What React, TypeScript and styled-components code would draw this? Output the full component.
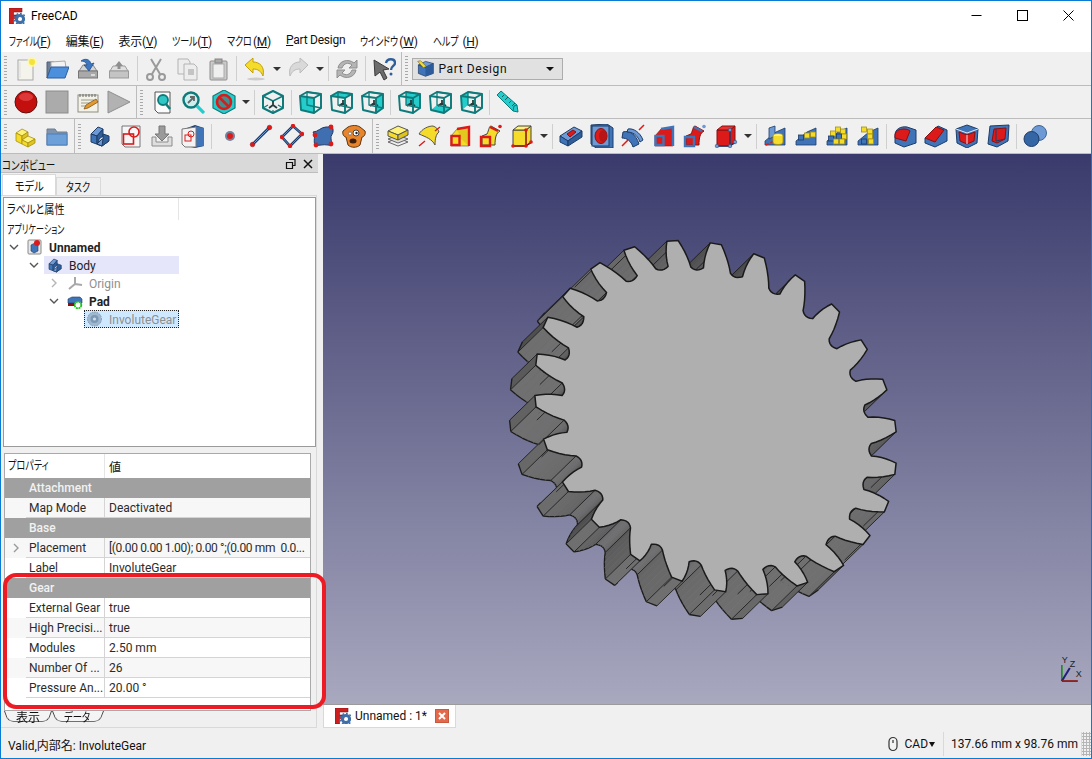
import React from 'react';
import styled, { createGlobalStyle } from 'styled-components';

const GlobalStyle = createGlobalStyle`
  html, body {
    margin: 0;
    padding: 0;
    background: #f0f0f0;
  }
  body {
    font-family: Roboto, "Noto Sans CJK JP", sans-serif;
    font-size: 12px;
    font-feature-settings: "palt";
    color: #111;
  }
`;

const Y = '#f5dc2a';
const YL = '#fff27a';
const YD = '#a58f10';
const B = '#3f74b8';
const BL = '#6d9ad4';
const BD = '#1d3c68';
const R = '#dd1a1a';
const RD = '#8a1010';
const T = '#25cccc';
const TD = '#0f7a7a';

const faces: Record<string, string> = {
  front: '2,6 16,8 16,23 3,20',
  top: '2,6 9,2 23,4 16,8',
  right: '16,8 23,4 23,18 16,23',
  left: '2,6 9,2 9,15 3,20',
  rear: '9,2 23,4 23,18 9,15',
  bottom: '3,20 9,15 23,18 16,23',
};

const Cube = ({ fill }: { fill: string }) => (
  <g stroke={TD} strokeLinejoin="round" fill="none">
    <polygon points={faces[fill]} fill={T} stroke="none" />
    {fill !== 'front' && <path d="M14 13v-3M14 13l-4 3M14 13l4 3" stroke="#263c3c" strokeWidth="1.800" />}
    <polygon points={faces.rear} strokeWidth="1.300" />
    <polygon points={faces.front} strokeWidth="1.900" />
    <path d="M2 6l7-4 14 2v14l-7 5M16 8l7-4" strokeWidth="1.900" />
  </g>
);

const Pattern = ({ kind }: { kind: string }) => (
  <g stroke={BD} strokeWidth="0.8">
    <polygon points="2,17 13,8 22,4 22,21 2,21" fill={B} />
    {kind === 'mirror' && (
      <>
        <polygon points="6,4 12,2 12,12 6,15" fill={BL} />
        <path d="M3 21l18-9" stroke={R} strokeWidth="1.400" strokeDasharray="3 2" />
        <ellipse cx="15" cy="12" rx="5" ry="2.500" fill={YL} stroke={YD} />
        <path d="M10 12v6a5 2.500 0 0 0 10 0v-6" fill={Y} stroke={YD} />
      </>
    )}
    {kind !== 'mirror' &&
      (kind === 'linear'
        ? [[7, 13, B], [13, 11, Y], [19, 10, Y]]
        : kind === 'polar'
          ? [[13, 5, Y], [18, 7, Y], [8, 9, Y], [19, 12, Y], [6, 14, B], [14, 12, B], [11, 17, Y], [17, 17, Y]]
          : [[8, 5, Y], [14, 7, Y], [14, 12, Y], [8, 17, B], [15, 17, Y]]
      ).map((c, i) => (
        <g key={i} stroke={c[2] === Y ? YD : BD}>
          <rect x={(c[0] as number) - 2.5} y={(c[1] as number) - 2} width="5" height="5" fill={c[2] as string} />
        </g>
      ))}
  </g>
);

const glyphs: Record<string, React.ReactNode> = {
  new: (
    <>
      <rect x="4" y="3" width="15" height="20" fill="#f4f4ec" stroke="#a8a8a8" />
      <path d="M6 5v16" stroke="#ddd" />
      <circle cx="18" cy="5" r="5" fill="#fff7a0" opacity="0.8" />
      <circle cx="18" cy="5" r="3" fill="#f5e23a" />
    </>
  ),
  open: (
    <>
      <path d="M2 21V5h7l2 2h9v4H6z" fill="#6d7f96" stroke="#4c5d72" />
      <polygon points="6,5 20,4 21,11 6,12" fill="#f3f3f3" stroke="#aaa" />
      <polygon points="2,21 6,10 24,10 20,21" fill="#4c8fdc" stroke="#2c5f9e" />
    </>
  ),
  save: (
    <>
      <polygon points="3,14 7,8 17,8 21,14" fill="#d4d4d4" stroke="#888" />
      <rect x="2.500" y="14" width="19" height="7" fill="#a9a9a9" stroke="#777" />
      <path d="M15 18h4" stroke="#eee" strokeWidth="1.400" />
      <path d="M5 4c4-3 9-2 10 3l3-1-5 8-5-6 3 0c-1-3-3-4-6-4z" fill="#3d77bf" stroke="#234e86" strokeWidth="0.8" />
    </>
  ),
  saveas: (
    <>
      <polygon points="3,14 6,9 18,9 21,14" fill="#e0e0e0" stroke="#9c9c9c" />
      <rect x="2.500" y="14" width="19" height="7" fill="#c4c4c4" stroke="#999" />
      <path d="M12 4l4 5h-2.500v3h-3V9H8z" fill="#8f8f8f" />
    </>
  ),
  cut: (
    <g fill="none" stroke="#9a9a9a" strokeWidth="2">
      <path d="M7 2l9 15M17 2L8 17" />
      <circle cx="6" cy="20" r="3" />
      <circle cx="18" cy="20" r="3" />
    </g>
  ),
  copy: (
    <g stroke="#b3b3b3" fill="#ededed">
      <path d="M3 2h10l2 3v12H3z" />
      <path d="M9 7h10l3 3v13H9z" />
      <rect x="13" y="12" width="6" height="6" fill="#c4c4c4" stroke="none" />
    </g>
  ),
  paste: (
    <>
      <rect x="4" y="4" width="17" height="19" rx="1" fill="#cbcbcb" stroke="#8e8e8e" />
      <rect x="7" y="7" width="11" height="14" fill="#efefef" stroke="#aaa" />
      <rect x="9" y="2" width="7" height="4" fill="#a9a9a9" stroke="#858585" />
    </>
  ),
  undo: (
    <>
      <ellipse cx="13" cy="22" rx="9" ry="1.500" fill="#ccc" />
      <path d="M2 8l8-7v4c7 0 12 5 10 14-2-5-5-7-10-7v4z" fill={Y} stroke="#c19f10" strokeLinejoin="round" />
    </>
  ),
  redo: (
    <path d="M22 8l-8-7v4C7 5 2 10 4 19c2-5 5-7 10-7v4z" fill="#d9d9d9" stroke="#bcbcbc" strokeLinejoin="round" />
  ),
  refresh: (
    <g fill="#b5b5b5" stroke="#8f8f8f">
      <path d="M3 11C4 4 13 1 19 6l3-3v8h-8l3-3c-4-3-8-2-10 3z" />
      <path d="M21 13c-1 7-10 10-16 5l-3 3v-8h8l-3 3c4 3 8 2 10-3z" />
    </g>
  ),
  help: (
    <>
      <path d="M2 3l15 9-6 1 4 8-3 2-4-8-5 4z" fill="#6d6d6d" stroke="#3b3b3b" strokeLinejoin="round" />
      <path d="M14 6c1-5 9-5 9 0 0 3-4 3-4 7" fill="none" stroke="#2f5f9a" strokeWidth="2.400" />
      <circle cx="19" cy="17" r="1.500" fill="#2f5f9a" />
    </>
  ),
  record: (
    <>
      <circle cx="12" cy="12" r="11" fill="#c40f0f" stroke="#5e1010" />
      <ellipse cx="12" cy="7" rx="7" ry="4" fill="#e84a4a" opacity="0.7" />
    </>
  ),
  stop: <rect x="1" y="1" width="22" height="22" fill="#ababab" stroke="#8b8b8b" />,
  macro: (
    <>
      <rect x="2" y="5" width="20" height="17" fill="#f2f2e8" stroke="#8d8d80" />
      <path d="M4 4v3M7 4v3M10 4v3M13 4v3M16 4v3M19 4v3" stroke="#666" />
      <path d="M5 10h13M5 13h9M5 16h7" stroke="#9a9a8a" />
      <path d="M8 19l2-4 10-6 2 3-10 6z" fill="#e39a2c" stroke="#85561a" strokeWidth="0.8" />
    </>
  ),
  play: <polygon points="1,1 23,12 1,23" fill="#b2b2b2" stroke="#8f8f8f" />,
  fitall: (
    <>
      <path d="M5 2h15v21H8l-3-3z" fill="#fbfbfb" stroke="#555" />
      <circle cx="13" cy="10" r="5" fill="#30c6c6" stroke={TD} strokeWidth="1.800" />
      <path d="M16 14l4 5" stroke={TD} strokeWidth="2.500" />
    </>
  ),
  fitsel: (
    <>
      <circle cx="10" cy="10" r="7.500" fill="#cdeeee" stroke={TD} strokeWidth="2.400" />
      <path d="M7 13l6-6M9 7h4v4" stroke="#666" strokeWidth="1.800" fill="none" />
      <path d="M16 16l7 7" stroke={T} strokeWidth="3.200" />
    </>
  ),
  drawstyle: (
    <>
      <polygon points="12,0 23,6 23,18 12,24 1,18 1,6" fill={T} stroke={TD} strokeWidth="1.200" />
      <circle cx="12" cy="12" r="7" fill="#555" fillOpacity="0.5" stroke={R} strokeWidth="2.600" />
      <path d="M7 7l10 10" stroke={R} strokeWidth="2.600" />
    </>
  ),
  iso: (
    <g fill="none" stroke={TD} strokeLinejoin="round">
      <polygon points="12,1 22,6 22,18 12,23 2,18 2,6" strokeWidth="2" />
      <path d="M2 6l10 5 10-5" strokeWidth="1.400" />
      <path d="M12 11v4M12 15l-4 3M12 15l4 3" strokeWidth="1.800" stroke="#263c3c" />
      <path d="M2 18l5-3M22 18l-5-3M12 23v-3" strokeWidth="1.200" />
    </g>
  ),
  front: <Cube fill="front" />,
  top: <Cube fill="top" />,
  right: <Cube fill="right" />,
  rear: <Cube fill="rear" />,
  bottom: <Cube fill="bottom" />,
  left: <Cube fill="left" />,
  measure: (
    <>
      <polygon points="1,5 5,1 21,15 22,22 17,21" fill={T} stroke={TD} />
      <path d="M6 7l2-2M9 10l3-3M13 13l2-2M16 16l3-3" stroke="#0e5f5f" />
      <path d="M17 21l1-5 3-1" fill="none" stroke={TD} />
    </>
  ),
  part: (
    <g stroke={YD} strokeWidth="0.8" strokeLinejoin="round">
      <polygon points="2,9 8,5 14,8 8,12" fill={YL} />
      <polygon points="2,9 8,12 8,20 2,17" fill={Y} />
      <polygon points="8,12 14,8 14,12 8,16" fill="#e0c420" />
      <polygon points="8,16 14,12 21,15 14,19" fill={YL} />
      <polygon points="8,16 14,19 14,23 8,20" fill={Y} />
      <polygon points="14,19 21,15 21,19 14,23" fill="#e0c420" />
    </g>
  ),
  folder: (
    <>
      <path d="M2 21V5h8l2 3h10v13z" fill="#7f95ae" stroke="#6c7f94" />
      <rect x="2" y="10" width="20" height="11" fill="#6d9fd9" stroke="#4e7fb8" />
    </>
  ),
  body: (
    <g stroke={BD} strokeWidth="1" strokeLinejoin="round">
      <polygon points="3,10 10,3 15,5 9,12" fill={BL} />
      <polygon points="3,10 9,12 9,20 14,22 3,18" fill={B} />
      <polygon points="9,12 15,5 15,12 11,15 11,17 9,20" fill="#2f5e99" />
      <polygon points="9,20 14,15 21,17 14,22" fill={BL} />
      <polygon points="14,22 21,17 21,12 15,10 15,15" fill="#2f5e99" />
    </g>
  ),
  sketch: (
    <>
      <path d="M3 2h18v21H6l-3-3z" fill="#f6f6f6" stroke="#777" />
      <rect x="4.500" y="10" width="10" height="10" fill="none" stroke={R} strokeWidth="1.600" />
      <circle cx="15" cy="8" r="5" fill="none" stroke={R} strokeWidth="1.600" />
    </>
  ),
  import: (
    <>
      <path d="M2 13v9h20v-9h-4v5H6v-5z" fill="#dedede" stroke="#8c8c8c" />
      <path d="M9 2h6v8h4l-7 7-7-7h4z" fill="#9b9b9b" stroke="#777" />
    </>
  ),
  attach: (
    <>
      <polygon points="6,4 14,1 23,4 23,22 14,24 6,22" fill={BD} />
      <polygon points="14,2 23,4 23,22 14,23" fill={B} />
      <path d="M1 5l14-2v20H4l-3-3z" fill="#f3f3f3" stroke="#777" />
      <rect x="4" y="11" width="6" height="6" fill="none" stroke={R} />
      <circle cx="10" cy="10" r="3" fill="none" stroke={R} />
    </>
  ),
  workbench: (
    <>
      <polygon points="2,7 12,10 23,5 23,19 12,23 2,19" fill={B} stroke={BD} />
      <polygon points="2,7 12,2 23,5 12,10" fill={BL} stroke={BD} />
      <polygon points="12,10 23,5 23,19 12,23" fill="#2c5c9b" />
      <path d="M1 2l4-1 8 8-4 2z" fill={Y} stroke="#6b5c10" strokeWidth="0.800" />
    </>
  ),
  point: (
    <>
      <circle cx="12" cy="12" r="5" fill={BD} opacity="0.6" />
      <circle cx="12" cy="12" r="3" fill={R} />
    </>
  ),
  line: (
    <>
      <path d="M3 21L21 3" stroke={BD} strokeWidth="3" />
      <path d="M3 21L21 3" stroke={BL} strokeWidth="1" />
      <circle cx="3.500" cy="20.500" r="2.300" fill={R} stroke={RD} strokeWidth="0.500" />
      <circle cx="20.500" cy="3.500" r="2.300" fill={R} stroke={RD} strokeWidth="0.500" />
    </>
  ),
  plane: (
    <>
      <polygon points="2,13 13,2 22,10 10,22" fill="none" stroke={BD} strokeWidth="2.600" />
      <polygon points="2,13 13,2 22,10 10,22" fill="none" stroke={BL} strokeWidth="0.800" />
      {[[2, 13], [13, 2], [22, 10], [10, 22]].map(([x, y]) => (
        <circle key={x} cx={x} cy={y} r="2.200" fill={R} />
      ))}
    </>
  ),
  lcs: (
    <>
      <path d="M2 8c5 0 8-5 13-5 5 0 6-1 7 2 1 5-3 6-2 10 1 4 2 7-3 6-5-1-9 1-13 0-2-4 1-9-2-13z" fill="#3f6fb0" stroke={BD} />
      {[[4, 11], [20, 3], [20, 20], [5, 21]].map(([x, y]) => (
        <circle key={x + y} cx={x} cy={y} r="2.400" fill={R} />
      ))}
    </>
  ),
  binder: (
    <>
      <path d="M1 7l5-4c4-2 9-2 12 0l5 4c1 3-1 6-3 6l-2 8c-3 3-9 3-12 0l-2-8c-2 0-4-3-3-6z" fill="#e8852c" stroke="#5e3410" />
      <circle cx="14" cy="9" r="3" fill="#fff" stroke="#444" />
      <circle cx="14.500" cy="9" r="1.200" fill="#222" />
      <circle cx="8" cy="9.500" r="1.500" fill="#fff" stroke="#444" strokeWidth="0.500" />
      <ellipse cx="11" cy="17" rx="3.500" ry="2.500" fill="#40200c" />
    </>
  ),
  pad: (
    <g strokeLinejoin="round">
      <polygon points="2,18 12,14 22,18 12,22" fill="none" stroke="#666" />
      <polygon points="2,15 12,11 22,15 12,19" fill="#dcdcdc" stroke="#666" />
      <polygon points="2,7 12,2 22,6 12,11" fill={YL} stroke="#555" />
      <polygon points="2,7 12,11 12,16 2,12" fill={Y} stroke="#555" />
      <polygon points="12,11 22,6 22,11 12,16" fill="#dfc41e" stroke="#555" />
    </g>
  ),
  revolve: (
    <>
      <path d="M2 10C5 5 11 2 16 2c3 1 5 3 6 6-3 2-4 7-4 13C15 15 9 13 2 10z" fill={Y} stroke="#555" />
      <path d="M2 22l6-5M18 7l5-4" stroke={R} strokeWidth="1.400" />
    </>
  ),
  loft: (
    <>
      <polygon points="3,12 9,5 21,3 21,22 3,22" fill={Y} stroke="#555" strokeWidth="0.600" />
      <polygon points="9,5 21,3 21,22 13,15" fill="#e3c820" />
      <path d="M9 5l12-2v19" fill="none" stroke={R} strokeWidth="2.400" />
      <rect x="3.500" y="12" width="8" height="9" fill={Y} stroke={R} strokeWidth="2.400" />
    </>
  ),
  pipe: (
    <>
      <path d="M8 10C10 6 10 2 12 2l9 5c-4 2-5 7-5 14l-13 0v-9z" fill={Y} stroke="#444" />
      <path d="M2 13h9v9H2zM11 3l8 4" fill="none" stroke={R} strokeWidth="2.400" />
      <circle cx="21" cy="2.500" r="1.800" fill={R} />
    </>
  ),
  prim: (
    <>
      <polygon points="3,6 16,6 21,2 21,19 16,22 3,22" fill={Y} stroke="#444" />
      <polygon points="3,6 8,2 21,2 16,6" fill={YL} stroke="#444" />
      <path d="M3 22h13v-16M16 22l5-4" fill="none" stroke={RD} strokeWidth="1.500" />
      {[[3, 22], [16, 22], [16, 6], [21, 18]].map(([x, y]) => (
        <circle key={x + y} cx={x} cy={y} r="1.800" fill={R} />
      ))}
    </>
  ),
  pocket: (
    <g stroke={BD} strokeLinejoin="round">
      <polygon points="1,12 15,3 23,7 9,17" fill={BL} />
      <polygon points="1,12 9,17 9,22 1,18" fill={B} />
      <polygon points="9,17 23,7 23,13 9,22" fill="#2f5e99" />
      <polygon points="8,10 14,6 17,8 11,13" fill={R} stroke={RD} />
    </g>
  ),
  hole: (
    <>
      <polygon points="1,1 17,0 23,4 23,24 6,24 1,20" fill={B} stroke={BD} />
      <rect x="2" y="2" width="17" height="20" fill="#6d9ad4" stroke={BD} />
      <ellipse cx="11" cy="12" rx="6" ry="7.500" fill={R} stroke={RD} />
      <ellipse cx="13" cy="12" rx="4" ry="6" fill="#b81616" />
    </>
  ),
  groove: (
    <>
      <path d="M2 8c6-2 13 2 16 12l-6 3C10 17 6 14 1 14z" fill={B} stroke={BD} />
      <path d="M7 5c5-1 12 3 15 11l-3 2C16 10 11 8 6 8z" fill={BL} stroke={BD} />
      <path d="M1 22l6-6M18 6l5-5" stroke={R} strokeWidth="1.500" />
    </>
  ),
  subloft: (
    <>
      <polygon points="3,12 9,5 21,3 21,22 3,22" fill={R} stroke={RD} strokeWidth="0.600" />
      <path d="M9 5l12-2v19" fill="none" stroke={B} strokeWidth="2.400" />
      <rect x="3.500" y="12" width="8" height="9" fill={R} stroke={B} strokeWidth="2.400" />
    </>
  ),
  subpipe: (
    <>
      <path d="M8 10C10 6 10 2 12 2l9 5c-4 2-5 7-5 14l-13 0v-9z" fill={R} stroke={RD} />
      <path d="M2 13h9v9H2zM11 3l8 4" fill="none" stroke={B} strokeWidth="2.400" />
      <rect x="5" y="16" width="3" height="3" fill={R} />
      <circle cx="21" cy="2.500" r="1.800" fill={BL} />
    </>
  ),
  subprim: (
    <>
      <polygon points="3,6 16,6 21,2 21,19 16,22 3,22" fill={R} stroke={RD} />
      <polygon points="3,6 8,2 21,2 16,6" fill="#ec3030" stroke={RD} />
      <path d="M3 22h13v-16M16 22l5-4" fill="none" stroke={BD} strokeWidth="1.500" />
      {[[3, 22], [16, 22], [16, 6], [21, 18]].map(([x, y]) => (
        <circle key={x + y} cx={x} cy={y} r="1.800" fill={BL} stroke={BD} strokeWidth="0.500" />
      ))}
    </>
  ),
  mirror: <Pattern kind="mirror" />,
  linear: <Pattern kind="linear" />,
  polar: <Pattern kind="polar" />,
  multi: <Pattern kind="multi" />,
  fillet: (
    <>
      <path d="M2 11C2 5 8 2 14 3l9 3v13l-12 4-9-4z" fill={B} stroke={BD} />
      <path d="M2 12C2 7 6 5 11 5c3 0 5 1 6 2L13 17l-11-3z" fill={R} stroke={RD} />
    </>
  ),
  chamfer: (
    <>
      <polygon points="1,14 14,2 23,6 23,17 11,23 1,19" fill={B} stroke={BD} />
      <polygon points="1,14 12,3 20,6 11,18" fill={R} stroke={RD} />
    </>
  ),
  draft: (
    <>
      <polygon points="12,1 23,5 22,19 12,24 2,19 1,5" fill={B} stroke={BD} />
      <polygon points="4,8 12,11 20,8 19,17 12,20 5,17" fill={R} stroke={RD} />
      <path d="M12 11v9M1 5l11 4 11-4" stroke="#dfe8f4" strokeWidth="1" fill="none" />
    </>
  ),
  thick: (
    <>
      <polygon points="4,2 23,1 22,17 11,23 2,20" fill={B} stroke={BD} />
      <polygon points="8,5 20,4 19,15 11,19 6,17" fill={R} stroke={RD} />
      <path d="M10 5v12l9-2" stroke={BD} fill="none" />
    </>
  ),
  boolean: (
    <>
      <circle cx="16" cy="9" r="7.500" fill={BL} stroke="#3d6597" />
      <circle cx="8.500" cy="15" r="7.500" fill="#3466a5" stroke={BD} />
    </>
  ),
  unnamed: (
    <>
      <rect x="1" y="1" width="13" height="14" rx="1" fill="#e8e8e8" stroke="#888" />
      <polygon points="4,6 8,4 11,6 11,12 7,14 4,12" fill={B} stroke={BD} strokeWidth="0.600" />
      <circle cx="10" cy="4" r="3" fill={R} />
    </>
  ),
  tbody: (
    <g transform="scale(0.680)">
      <polygon points="3,10 10,3 15,5 9,12" fill={BL} stroke={BD} />
      <polygon points="3,10 9,12 9,20 14,22 3,18" fill={B} stroke={BD} />
      <polygon points="9,12 15,5 15,12 11,15 11,17 9,20" fill="#2f5e99" stroke={BD} />
      <polygon points="9,20 14,15 21,17 14,22" fill={BL} stroke={BD} />
      <polygon points="14,22 21,17 21,12 15,10 15,15" fill="#2f5e99" stroke={BD} />
    </g>
  ),
  origin: <path d="M8 2v7M8 9l-6 5M8 9l7 1" stroke="#a8a8a8" strokeWidth="2" fill="none" />,
  tpad: (
    <>
      <path d="M1 6l4-2h8l2 2v4H1z" fill={B} stroke={BD} strokeWidth="0.600" />
      <path d="M1 10h8v3H1z" fill={RD} />
      <circle cx="11" cy="12" r="3.300" fill="#fff" stroke="#10c810" strokeWidth="1.800" strokeDasharray="2 0.600" />
    </>
  ),
  tgear: (
    <>
      <circle cx="7.500" cy="8" r="7" fill="#9fb7cf" stroke="#7f9ab5" strokeDasharray="1.500 1" />
      <circle cx="7.500" cy="8" r="4" fill="#7c98b3" />
      <circle cx="7.500" cy="8" r="1.600" fill="#cfdbe6" />
    </>
  ),
  logo: (
    <>
      <polygon points="0,0 13,0 13,4 4.500,4 4.500,7 9,7 9,10.500 4.500,10.500 4.500,16 0,16" fill="#cc2020" stroke="#7e1212" strokeWidth="0.600" />
      <circle cx="11" cy="11" r="3.600" fill="none" stroke="#3f6fa8" strokeWidth="3" />
      <circle cx="11" cy="11" r="5.500" fill="none" stroke="#3f6fa8" strokeWidth="1.600" strokeDasharray="1.800 1.800" />
    </>
  ),
  mouse: (
    <>
      <rect x="3" y="1.500" width="8" height="13" rx="4" fill="#f4f4f4" stroke="#333" strokeWidth="1.200" />
      <path d="M7 4v3" stroke="#333" strokeWidth="1.200" />
    </>
  ),
};

const smallBoxes: Record<string, string> = {
  unnamed: '0 0 16 16',
  tbody: '0 0 16 16',
  origin: '0 0 16 16',
  tpad: '0 0 16 16',
  tgear: '0 0 16 16',
  logo: '0 0 16 16',
  mouse: '0 0 14 16',
};

const GlyphSvg = styled.svg<{ $size: number }>`
  width: ${(p) => p.$size}px;
  height: ${(p) => p.$size}px;
  flex: none;
  display: block;
`;

const Glyph = ({ name, size = 24 }: { name: string; size?: number }) => (
  <GlyphSvg $size={size} viewBox={smallBoxes[name] || '0 0 24 24'}>
    {glyphs[name]}
  </GlyphSvg>
);

// the reference uses a narrow Japanese UI face, so kana are condensed to its widths
const Narrow = styled.span<{ $w: number; $s: number }>`
  display: inline-block;
  width: ${(p) => p.$w}px;
  white-space: nowrap;
  transform: scaleX(${(p) => p.$s});
  transform-origin: left center;
`;

const Window = styled.div`
  width: 1092px;
  height: 759px;
  box-sizing: border-box;
  border: 1px solid #0a7bd4;
  display: flex;
  flex-direction: column;
  position: relative;
  overflow: hidden;
  background: #f0f0f0;
`;

const TitleBar = styled.div`
  height: 29px;
  flex: none;
  display: flex;
  align-items: center;
  background: #fff;
  padding-left: 8px;
`;

const TitleText = styled.span`
  flex: 1;
  margin-left: 6px;
  font-size: 12px;
  color: #000;
`;

const WinButton = styled.button`
  width: 46px;
  height: 29px;
  padding: 0;
  border: 0;
  background: transparent;
  display: flex;
  align-items: center;
  justify-content: center;
`;

const MenuBar = styled.div`
  height: 22px;
  flex: none;
  box-sizing: border-box;
  padding-bottom: 2px;
  display: flex;
  align-items: center;
  background: #fff;
`;

const MenuItem = styled.span`
  padding: 0 7.5px;
  font-size: 12px;
  letter-spacing: -0.25px;
  white-space: nowrap;
  color: #111;
`;

const Key = styled.span`
  text-decoration: underline;
`;

const ToolRow = styled.div<{ $height: number }>`
  height: ${(p) => p.$height}px;
  flex: none;
  box-sizing: border-box;
  display: flex;
  align-items: stretch;
  background: #f0f0f0;
  border-bottom: 1px solid #bcbcbc;
`;

const ToolGroup = styled.div<{ $end?: boolean; $width?: number }>`
  display: flex;
  align-items: center;
  ${(p) => (p.$width ? `width: ${p.$width}px; box-sizing: border-box;` : '')}
  ${(p) => (p.$end ? 'border-right: 1px solid #bcbcbc;' : '')}
`;

const Handle = styled.div`
  width: 3px;
  height: 25px;
  margin: 0 3px 0 3px;
  flex: none;
  background: repeating-linear-gradient(#a9a9a9 0 1px, transparent 1px 3px);
`;

const HandleSpacer = styled.div`
  width: 0.5px;
  flex: none;
`;

const ToolButton = styled.div`
  width: 31px;
  height: 26px;
  flex: none;
  display: flex;
  align-items: center;
  justify-content: center;
`;

const DropArrow = styled.div`
  width: 12px;
  flex: none;
  display: flex;
  justify-content: center;
  &::before {
    content: '';
    border-left: 4px solid transparent;
    border-right: 4px solid transparent;
    border-top: 4px solid #333;
  }
`;

const ToolSep = styled.div`
  width: 1px;
  height: 25px;
  margin: 0 2.5px;
  flex: none;
  background: #cfcfcf;
`;

const Combo = styled.div`
  width: 151px;
  height: 22px;
  box-sizing: border-box;
  display: flex;
  align-items: center;
  background: #e1e1e1;
  border: 1px solid #adadad;
  padding: 0 6px 0 4px;
  gap: 5px;
`;

const ComboText = styled.span`
  flex: 1;
  font-size: 12px;
  letter-spacing: 0.6px;
  color: #111;
`;

const ComboArrow = styled.div`
  border-left: 4px solid transparent;
  border-right: 4px solid transparent;
  border-top: 4px solid #111;
  margin-right: 2px;
`;

const Main = styled.div`
  flex: 1;
  min-height: 0;
  display: flex;
`;

const LeftDock = styled.div`
  width: 322px;
  flex: none;
  display: flex;
  flex-direction: column;
`;

const DockTitle = styled.div`
  width: 317px;
  height: 19px;
  flex: none;
  box-sizing: border-box;
  display: flex;
  align-items: center;
  background: #d9d9d9;
  border-bottom: 1px solid #bdbdbd;
  padding: 2px 2px 0 1px;
  font-size: 12px;
`;

const DockTitleText = styled.span`
  flex: 1;
`;

const DockButton = styled.svg`
  width: 16px;
  height: 12px;
  flex: none;
  margin-left: 1px;
`;

const TabStrip = styled.div`
  height: 22px;
  flex: none;
  display: flex;
  align-items: flex-end;
  padding-left: 1px;
`;

const TopTab = styled.div<{ $active?: boolean }>`
  width: ${(p) => (p.$active ? '54px' : '45px')};
  height: ${(p) => (p.$active ? '21px' : '18px')};
  box-sizing: border-box;
  display: flex;
  align-items: center;
  justify-content: center;
  background: ${(p) => (p.$active ? '#fff' : '#f0f0f0')};
  border: 1px solid #d9d9d9;
  border-bottom: 0;
  font-size: 12px;
`;

const TabPane = styled.div`
  width: 316px;
  height: 533px;
  flex: none;
  box-sizing: border-box;
  display: flex;
  flex-direction: column;
  border: 1px solid #d9d9d9;
  border-left: 0;
  padding: 1px 0 0 2px;
  background: #f0f0f0;
`;

const Tree = styled.div`
  width: 313px;
  height: 250px;
  flex: none;
  box-sizing: border-box;
  border: 1px solid #9a9a9a;
  background: #fff;
  display: flex;
  flex-direction: column;
`;

const TreeHeader = styled.div`
  height: 22px;
  width: 175px;
  flex: none;
  display: flex;
  align-items: center;
  box-sizing: border-box;
  padding: 0 0 2px 3px;
  border-right: 1px solid #e5e5e5;
  font-size: 12px;
`;

const TreeRow = styled.div<{ $depth: number }>`
  height: 18px;
  width: 175px;
  flex: none;
  box-sizing: border-box;
  display: flex;
  align-items: center;
  padding-left: ${(p) => p.$depth * 20}px;
  font-size: 12px;
`;

const Chevron = styled.svg`
  width: 20px;
  height: 18px;
  flex: none;
`;

const TreeCell = styled.div<{ $state?: 'hover' | 'selected' }>`
  flex: 1;
  min-width: 0;
  height: 18px;
  box-sizing: border-box;
  display: flex;
  align-items: center;
  gap: 6px;
  padding-left: 3px;
  overflow: hidden;
  white-space: nowrap;
  ${(p) => (p.$state === 'hover' ? 'background: #e6e6fa;' : '')}
  ${(p) => (p.$state === 'selected' ? 'background: #cde8ff; outline: 1px dotted #222; outline-offset: -1px;' : '')}
`;

const TreeCaption = styled(TreeCell)`
  padding-bottom: 2px;
`;

const TreeLabel = styled.span<{ $bold?: boolean; $muted?: boolean }>`
  padding-top: 2px;
  font-weight: ${(p) => (p.$bold ? 700 : 400)};
  color: ${(p) => (p.$muted ? '#8f8f8f' : '#222')};
`;

const PropertyBox = styled.div`
  width: 307px;
  height: 258px;
  margin: 6px 0 0 1px;
  flex: none;
  box-sizing: border-box;
  border: 1px solid #a9a9a9;
  background: #fff;
  display: flex;
  flex-direction: column;
`;

const PropHeader = styled.div`
  height: 24px;
  flex: none;
  display: flex;
  align-items: center;
  font-size: 12px;
`;

const PropHeadName = styled.div`
  width: 100px;
  padding-left: 3px;
  box-sizing: border-box;
  line-height: 24px;
  border-right: 1px solid #e5e5e5;
`;

const PropHeadValue = styled.div`
  padding-left: 4px;
`;

const GroupRow = styled.div`
  height: 20px;
  flex: none;
  box-sizing: border-box;
  background: #a0a0a0;
  color: #f2f2f2;
  padding-left: 24px;
  line-height: 20px;
  font-size: 12px;
  font-weight: 500;
`;

const PropRow = styled.div<{ $alt?: boolean }>`
  height: 20px;
  flex: none;
  display: flex;
  font-size: 12px;
  color: #2b2b2b;
  background: ${(p) => (p.$alt ? '#f7f7f7' : '#fff')};
`;

const Gutter = styled.div`
  width: 21px;
  flex: none;
  display: flex;
  align-items: center;
  justify-content: center;
`;

const PropName = styled.div`
  width: 79px;
  flex: none;
  box-sizing: border-box;
  padding-left: 3px;
  line-height: 20px;
  height: 20px;
  white-space: nowrap;
  overflow: hidden;
  border-right: 1px solid #d4d4d4;
  border-bottom: 1px solid #d4d4d4;
`;

const PropValue = styled.div<{ $tight?: boolean }>`
  flex: 1;
  min-width: 0;
  height: 20px;
  box-sizing: border-box;
  padding-left: 4px;
  line-height: 20px;
  white-space: pre;
  overflow: hidden;
  border-bottom: 1px solid #d4d4d4;
  ${(p) => (p.$tight ? 'letter-spacing: -0.35px;' : '')}
`;

const BottomTabs = styled.div`
  display: flex;
  flex: none;
  padding-left: 1px;
  height: 16px;
`;

const SideTab = styled.div<{ $width: number }>`
  width: ${(p) => p.$width}px;
  height: 14px;
  position: relative;
  display: flex;
  align-items: center;
  justify-content: center;
  font-size: 12px;
  line-height: 14px;
  z-index: 0;
  &::before {
    content: '';
    position: absolute;
    inset: 0;
    box-sizing: border-box;
    border: 1px solid #444;
    border-top: 0;
    border-radius: 0 0 7px 7px;
    background: #f4f4f4;
    transform: perspective(26px) rotateX(-22deg);
    transform-origin: top;
    z-index: -1;
  }
`;

const RightColumn = styled.div`
  flex: 1;
  min-width: 0;
  display: flex;
  flex-direction: column;
`;

const Viewport = styled.div`
  height: 551px;
  flex: none;
  background: linear-gradient(#3a3a6c, #a8a8bf);
  border-bottom: 1px solid #9b9b9b;
  box-sizing: border-box;
`;

const ViewSvg = styled.svg`
  width: 100%;
  height: 100%;
  display: block;
`;

const DocTabs = styled.div`
  flex: 1;
  display: flex;
  align-items: flex-start;
`;

const DocTab = styled.div`
  width: 133px;
  height: 23px;
  box-sizing: border-box;
  background: #fff;
  border: 1px solid #d9d9d9;
  border-top: 0;
  display: flex;
  align-items: center;
  padding-left: 11px;
  gap: 4px;
  font-size: 12px;
`;

const DocClose = styled.div`
  width: 14px;
  height: 14px;
  margin-left: 4px;
  background: #e4694a;
  border: 1px solid #c75a3e;
  box-sizing: border-box;
  display: flex;
  align-items: center;
  justify-content: center;
`;

const StatusBar = styled.div`
  height: 28px;
  flex: none;
  display: flex;
  align-items: center;
  padding-left: 7px;
  font-size: 12px;
`;

const StatusText = styled.span`
  flex: 1;
`;

const NavStyle = styled.div`
  display: flex;
  align-items: center;
  gap: 4px;
  padding-right: 8px;
  border-right: 1px solid #d9d9d9;
  height: 24px;
`;

const SmallArrow = styled.span`
  border-left: 3.5px solid transparent;
  border-right: 3.5px solid transparent;
  border-top: 5px solid #111;
  margin-left: -3px;
`;

const Dimensions = styled.div`
  padding: 0 3px 0 7px;
  height: 24px;
  line-height: 24px;
  white-space: nowrap;
  border-right: 1px solid #d9d9d9;
`;

const Grip = styled.div`
  width: 9px;
  height: 24px;
  flex: none;
  background: radial-gradient(circle, #b5b5b5 1px, transparent 1.2px) 0 12px / 3px 3px;
`;

const Highlight = styled.div`
  position: absolute;
  left: 2px;
  top: 571.5px;
  width: 323px;
  height: 136px;
  box-sizing: border-box;
  border: 4px solid #ed1c24;
  border-radius: 13px;
  pointer-events: none;
`;

// tooth tips and roots were read off the picture, in 3x crop coordinates
const tips: [number, number][] = [
  [522, 33], [652, 42], [782, 78], [905, 145], [1012, 235], [1098, 345], [1160, 465], [1192, 590], [1192, 718],
  [1165, 832], [1105, 932], [1022, 1018], [912, 1065], [792, 1095], [665, 1085], [535, 1050], [410, 985],
  [290, 882], [200, 772], [140, 645], [110, 515], [113, 390], [140, 278], [203, 188], [290, 108], [392, 56],
];
const roots: [number, number][] = [
  [595, 118], [712, 140], [825, 188], [925, 258], [1000, 345], [1060, 440], [1100, 545], [1115, 660], [1098, 760],
  [1060, 850], [995, 930], [905, 985], [812, 1012], [700, 1020], [592, 998], [478, 950], [385, 880], [305, 795],
  [245, 695], [205, 590], [195, 480], [208, 375], [248, 280], [312, 205], [400, 150], [490, 118],
];

const quad = (a: number[], c: number[], b: number[], n: number) => {
  const out: number[][] = [];
  for (let i = 1; i <= n; i++) {
    const t = i / n;
    const u = 1 - t;
    out.push([u * u * a[0] + 2 * u * t * c[0] + t * t * b[0], u * u * a[1] + 2 * u * t * c[1] + t * t * b[1]]);
  }
  return out;
};

const TIP_HALF = 17;
const ROOT_HALF = 19;

const buildOutline = () => {
  const pts: number[][] = [];
  const sharp: number[][] = [];
  const n = tips.length;
  for (let i = 0; i < n; i++) {
    const prev = tips[(i + n - 1) % n];
    const next = tips[(i + 1) % n];
    const nn = tips[(i + 2) % n];
    const tip = tips[i];
    let tx = next[0] - prev[0];
    let ty = next[1] - prev[1];
    let len = Math.hypot(tx, ty);
    tx /= len;
    ty /= len;
    const left = [tip[0] - tx * TIP_HALF, tip[1] - ty * TIP_HALF];
    const right = [tip[0] + tx * TIP_HALF, tip[1] + ty * TIP_HALF];
    let ux = nn[0] - tip[0];
    let uy = nn[1] - tip[1];
    len = Math.hypot(ux, uy);
    ux /= len;
    uy /= len;
    const nextLeft = [next[0] - ux * TIP_HALF, next[1] - uy * TIP_HALF];
    const r = roots[i];
    const inX = -uy;
    const inY = ux;
    const rootA = [r[0] - tx * ROOT_HALF - inX * 7, r[1] - ty * ROOT_HALF - inY * 7];
    const rootB = [r[0] + ux * ROOT_HALF - inX * 7, r[1] + uy * ROOT_HALF - inY * 7];
    const ctrl = [r[0] + inX * 10, r[1] + inY * 10];
    pts.push(left, right);
    sharp.push(left, right);
    const ctrlA = [(right[0] + rootA[0]) / 2 + ux * 8, (right[1] + rootA[1]) / 2 + uy * 8];
    const ctrlB = [(rootB[0] + nextLeft[0]) / 2 - ux * 8, (rootB[1] + nextLeft[1]) / 2 - uy * 8];
    pts.push(...quad(right, ctrlA, rootA, 5));
    sharp.push(rootA);
    pts.push(...quad(rootA, ctrl, rootB, 6));
    sharp.push(rootB);
    pts.push(...quad(rootB, ctrlB, nextLeft, 5).slice(0, 4));
  }
  return { pts, sharp };
};

const OFFSET = [-76, 74];

const buildGear = () => {
  const { pts, sharp } = buildOutline();
  const quads: { key: number; order: number; points: string; fill: string; back: string }[] = [];
  pts.forEach((a, i) => {
    const b = pts[(i + 1) % pts.length];
    const nx = b[1] - a[1];
    const ny = a[0] - b[0];
    const len = Math.hypot(nx, ny) || 1;
    const dot = (nx * OFFSET[0] + ny * OFFSET[1]) / len;
    if (dot <= 0) return;
    const lit = ((nx / len) * -0.55 + (ny / len) * 0.83 + 1) / 2;
    const shade = Math.round(34 + lit * 78);
    const fill = `rgb(${shade},${shade},${shade})`;
    const a2 = [a[0] + OFFSET[0], a[1] + OFFSET[1]];
    const b2 = [b[0] + OFFSET[0], b[1] + OFFSET[1]];
    quads.push({
      key: i,
      order: (a[0] + b[0]) * OFFSET[0] + (a[1] + b[1]) * OFFSET[1],
      points: `${a[0]},${a[1]} ${b[0]},${b[1]} ${b2[0]},${b2[1]} ${a2[0]},${a2[1]}`,
      fill,
      back: `M${a2[0]} ${a2[1]}L${b2[0]} ${b2[1]}`,
    });
  });
  quads.sort((p, q) => p.order - q.order);
  const face = pts.map((p) => `${p[0].toFixed(1)},${p[1].toFixed(1)}`).join(' ');
  return { quads, face, sharp };
};

const gear = buildGear();

const GearDrawing = () => (
  <g transform="translate(176 76) scale(0.3333)">
    {gear.quads.map((q) => (
      <g key={q.key}>
        <polygon points={q.points} fill={q.fill} stroke={q.fill} strokeWidth="1" />
        <path d={q.back} stroke="#1c1c1c" strokeWidth="4" />
      </g>
    ))}
    {gear.sharp.map((p, i) => (
      <path key={i} d={`M${p[0]} ${p[1]}l${OFFSET[0]} ${OFFSET[1]}`} stroke="#1c1c1c" strokeWidth="3" opacity="0.85" />
    ))}
    <polygon points={gear.face} fill="#afafaf" stroke="#1a1a1a" strokeWidth="4.500" strokeLinejoin="round" />
  </g>
);

const AxisLabel = styled.text`
  font-family: "Liberation Sans", sans-serif;
  font-size: 9px;
  fill: #222;
`;

const Axes = () => (
  <g transform="translate(738 504)">
    <path d="M2 24V8" stroke="#1d8a1d" strokeWidth="1.600" />
    <path d="M2 24L10 11" stroke="#20207a" strokeWidth="2" />
    <path d="M2 24H18" stroke="#8a1a1a" strokeWidth="1.800" />
    <AxisLabel x="2" y="6">Y</AxisLabel>
    <AxisLabel x="10" y="10">Z</AxisLabel>
    <AxisLabel x="16" y="20">X</AxisLabel>
  </g>
);

const toolRows: Record<string, string[]> = {
  file: ['new', 'open', 'save', 'saveas', '|', 'cut', 'copy', 'paste', '|', 'undo', 'v', 'redo', 'v', '|', 'refresh', '|', 'help'],
  macro: ['record', 'stop', 'macro', 'play'],
  view: ['fitall', 'fitsel', 'drawstyle', 'v', '|', 'iso', '|', 'front', 'top', 'right', '|', 'rear', 'bottom', 'left', '|', 'measure'],
  part: ['part', 'folder'],
  body: ['body', 'sketch', 'import', 'attach', '|', 'point', 'line', 'plane', 'lcs', 'binder'],
  design: [
    'pad', 'revolve', 'loft', 'pipe', 'prim', 'v', '|',
    'pocket', 'hole', 'groove', 'subloft', 'subpipe', 'subprim', 'v', '|',
    'mirror', 'linear', 'polar', 'multi', '|',
    'fillet', 'chamfer', 'draft', 'thick', '|',
    'boolean',
  ],
};

const Tools = ({ items }: { items: string[] }) => (
  <>
    <Handle />
    <HandleSpacer />
    {items.map((item, i) => {
      if (item === '|') return <ToolSep key={i} />;
      if (item === 'v') return <DropArrow key={i} />;
      return (
        <ToolButton key={i}>
          <Glyph name={item} />
        </ToolButton>
      );
    })}
  </>
);

const ChevronIcon = ({ open, muted }: { open?: boolean; muted?: boolean }) => (
  <Chevron viewBox="0 0 20 18">
    <path
      d={open ? 'M6 7l4 4 4-4' : 'M8 5l4 4-4 4'}
      fill="none"
      stroke={muted ? '#b5b5b5' : '#555'}
      strokeWidth="1.400"
    />
  </Chevron>
);

const props: { kind: 'group' | 'row'; name: string; value?: string; alt?: boolean; expand?: boolean }[] = [
  { kind: 'group', name: 'Attachment' },
  { kind: 'row', name: 'Map Mode', value: 'Deactivated', alt: true },
  { kind: 'group', name: 'Base' },
  { kind: 'row', name: 'Placement', value: '[(0.00 0.00 1.00); 0.00 °;(0.00 mm  0.0...', alt: true, expand: true },
  { kind: 'row', name: 'Label', value: 'InvoluteGear' },
  { kind: 'group', name: 'Gear' },
  { kind: 'row', name: 'External Gear', value: 'true' },
  { kind: 'row', name: 'High Precisi...', value: 'true', alt: true },
  { kind: 'row', name: 'Modules', value: '2.50 mm' },
  { kind: 'row', name: 'Number Of ...', value: '26', alt: true },
  { kind: 'row', name: 'Pressure An...', value: '20.00 °' },
];

const App = () => (
  <Window>
    <GlobalStyle />
    <TitleBar>
      <Glyph name="logo" size={16} />
      <TitleText>FreeCAD</TitleText>
      <WinButton>
        <svg width="11" height="11" viewBox="0 0 11 11">
          <path d="M0.500 5.500h10" stroke="#000" />
        </svg>
      </WinButton>
      <WinButton>
        <svg width="11" height="11" viewBox="0 0 11 11">
          <rect x="0.500" y="0.500" width="10" height="10" fill="none" stroke="#000" />
        </svg>
      </WinButton>
      <WinButton>
        <svg width="11" height="11" viewBox="0 0 11 11">
          <path d="M0.500 0.500l10 10M10.500 0.500l-10 10" stroke="#000" />
        </svg>
      </WinButton>
    </TitleBar>
    <MenuBar>
      <MenuItem><Narrow $w={28} $s={0.7}>ファイル</Narrow>(<Key>F</Key>)</MenuItem>
      <MenuItem>編集(<Key>E</Key>)</MenuItem>
      <MenuItem>表示(<Key>V</Key>)</MenuItem>
      <MenuItem><Narrow $w={25} $s={0.76}>ツール</Narrow>(<Key>T</Key>)</MenuItem>
      <MenuItem><Narrow $w={26} $s={0.76}>マクロ</Narrow>(<Key>M</Key>)</MenuItem>
      <MenuItem><Key>P</Key>art Design</MenuItem>
      <MenuItem><Narrow $w={39} $s={0.74}>ウインドウ</Narrow>(<Key>W</Key>)</MenuItem>
      <MenuItem><Narrow $w={27} $s={0.75}>ヘルプ</Narrow> (<Key>H</Key>)</MenuItem>
    </MenuBar>
    <ToolRow $height={34}>
      <ToolGroup $end $width={401}>
        <Tools items={toolRows.file} />
      </ToolGroup>
      <ToolGroup>
        <Tools items={[]} />
        <Combo>
          <Glyph name="workbench" size={17} />
          <ComboText>Part Design</ComboText>
          <ComboArrow />
        </Combo>
      </ToolGroup>
    </ToolRow>
    <ToolRow $height={33}>
      <ToolGroup $end $width={136}>
        <Tools items={toolRows.macro} />
      </ToolGroup>
      <ToolGroup>
        <Tools items={toolRows.view} />
      </ToolGroup>
    </ToolRow>
    <ToolRow $height={35}>
      <ToolGroup $end $width={74}>
        <Tools items={toolRows.part} />
      </ToolGroup>
      <ToolGroup $end $width={298}>
        <Tools items={toolRows.body} />
      </ToolGroup>
      <ToolGroup>
        <Tools items={toolRows.design} />
      </ToolGroup>
    </ToolRow>
    <Main>
      <LeftDock>
        <DockTitle>
          <DockTitleText><Narrow $w={54} $s={0.8}>コンボビュー</Narrow></DockTitleText>
          <DockButton viewBox="0 0 16 12">
            <path d="M6 1.500h6v6h-2M3.500 4.500h6v6h-6z" fill="none" stroke="#111" strokeWidth="1.200" />
          </DockButton>
          <DockButton viewBox="0 0 16 12">
            <path d="M4 2l8 8M12 2l-8 8" stroke="#111" strokeWidth="1.500" />
          </DockButton>
        </DockTitle>
        <TabStrip>
          <TopTab $active><Narrow $w={28} $s={0.85}>モデル</Narrow></TopTab>
          <TopTab><Narrow $w={26} $s={0.75}>タスク</Narrow></TopTab>
        </TabStrip>
        <TabPane>
          <Tree>
            <TreeHeader><Narrow $w={57} $s={0.84}>ラベルと属性</Narrow></TreeHeader>
            <TreeRow $depth={0}>
              <TreeCaption><Narrow $w={58} $s={0.67}>アプリケーション</Narrow></TreeCaption>
            </TreeRow>
            <TreeRow $depth={0}>
              <ChevronIcon open />
              <TreeCell>
                <Glyph name="unnamed" size={16} />
                <TreeLabel $bold>Unnamed</TreeLabel>
              </TreeCell>
            </TreeRow>
            <TreeRow $depth={1}>
              <ChevronIcon open />
              <TreeCell $state="hover">
                <Glyph name="tbody" size={16} />
                <TreeLabel>Body</TreeLabel>
              </TreeCell>
            </TreeRow>
            <TreeRow $depth={2}>
              <ChevronIcon muted />
              <TreeCell>
                <Glyph name="origin" size={16} />
                <TreeLabel $muted>Origin</TreeLabel>
              </TreeCell>
            </TreeRow>
            <TreeRow $depth={2}>
              <ChevronIcon open />
              <TreeCell>
                <Glyph name="tpad" size={16} />
                <TreeLabel $bold>Pad</TreeLabel>
              </TreeCell>
            </TreeRow>
            <TreeRow $depth={3}>
              <Chevron viewBox="0 0 20 18" />
              <TreeCell $state="selected">
                <Glyph name="tgear" size={16} />
                <TreeLabel $muted>InvoluteGear</TreeLabel>
              </TreeCell>
            </TreeRow>
          </Tree>
          <PropertyBox>
            <PropHeader>
              <PropHeadName><Narrow $w={41} $s={0.76}>プロパティ</Narrow></PropHeadName>
              <PropHeadValue>値</PropHeadValue>
            </PropHeader>
            {props.map((row) =>
              row.kind === 'group' ? (
                <GroupRow key={row.name}>{row.name}</GroupRow>
              ) : (
                <PropRow key={row.name} $alt={row.alt}>
                  <Gutter>
                    {row.expand && (
                      <svg width="10" height="10" viewBox="0 0 10 10">
                        <path d="M3 1l4 4-4 4" fill="none" stroke="#9a9a9a" strokeWidth="1.400" />
                      </svg>
                    )}
                  </Gutter>
                  <PropName>{row.name}</PropName>
                  <PropValue $tight={row.expand}>{row.value}</PropValue>
                </PropRow>
              ),
            )}
          </PropertyBox>
          <BottomTabs>
            <SideTab $width={48}>表示</SideTab>
            <SideTab $width={52}><Narrow $w={28} $s={0.78}>データ</Narrow></SideTab>
          </BottomTabs>
        </TabPane>
      </LeftDock>
      <RightColumn>
        <Viewport>
          <ViewSvg viewBox="0 0 769 551">
            <GearDrawing />
            <Axes />
          </ViewSvg>
        </Viewport>
        <DocTabs>
          <DocTab>
            <Glyph name="logo" size={16} />
            Unnamed : 1*
            <DocClose>
              <svg width="8" height="8" viewBox="0 0 8 8">
                <path d="M1 1l6 6M7 1L1 7" stroke="#fff" strokeWidth="2" />
              </svg>
            </DocClose>
          </DocTab>
        </DocTabs>
      </RightColumn>
    </Main>
    <StatusBar>
      <StatusText>Valid,内部名: InvoluteGear</StatusText>
      <NavStyle>
        <Glyph name="mouse" size={16} />
        CAD
        <SmallArrow />
      </NavStyle>
      <Dimensions>137.66 mm x 98.76 mm</Dimensions>
      <Grip />
    </StatusBar>
    <Highlight />
  </Window>
);

export default App;
